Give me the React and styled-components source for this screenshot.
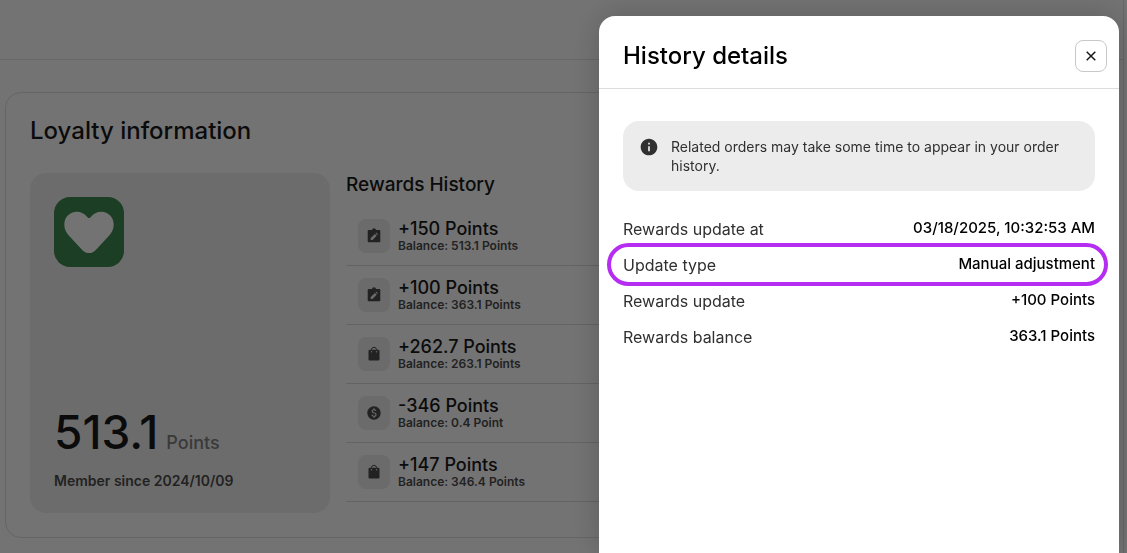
import React from "react";
import styled, { createGlobalStyle } from "styled-components";
import { MdInfo, MdPaid } from "react-icons/md";

const GlobalStyle = createGlobalStyle`
  * {
    box-sizing: border-box;
  }
  body {
    margin: 0;
    background: #fff;
    color: #1a1a1a;
    font-family: Inter, "Liberation Sans", sans-serif;
    overflow: hidden;
  }
  h1, h2, h3, p, ul, dl, dd {
    margin: 0;
    padding: 0;
  }
`;

const Page = styled.div`
  min-height: 100vh;
  margin-right: 3px;
  border-right: 1px solid #e4e4e4;
`;

const TopBar = styled.header`
  height: 60px;
  border-bottom: 1px solid #e4e4e4;
`;

const Card = styled.main`
  margin: 32px 24px 0 5px;
  padding: 20px 24px 24px;
  border: 1px solid #e0e0e0;
  border-radius: 16px;
`;

const CardTitle = styled.h1`
  font-size: 24px;
  font-weight: 500;
  line-height: 36px;
`;

const Columns = styled.div`
  display: flex;
  gap: 16px;
  margin-top: 24px;
`;

const Summary = styled.section`
  display: flex;
  flex-direction: column;
  flex: 0 0 300px;
  height: 340px;
  padding: 24px;
  border-radius: 16px;
  background: #f0f0f0;
`;

const Total = styled.p`
  display: flex;
  align-items: baseline;
  gap: 8px;
  margin-top: auto;
  font-size: 46px;
  font-weight: 500;
  line-height: 48px;
`;

const Unit = styled.span`
  color: #808080;
  font-size: 18px;
`;

const Member = styled.p`
  margin-top: 6px;
  color: #4d4d4d;
  font-size: 14px;
  font-weight: 600;
  line-height: 16px;
`;

const History = styled.section`
  flex: 1;
  min-width: 0;
`;

const HistoryTitle = styled.h2`
  font-size: 19px;
  font-weight: 500;
  line-height: 24px;
`;

const HistoryList = styled.ul`
  margin-top: 10px;
  list-style: none;
`;

const HistoryRow = styled.li`
  display: flex;
  align-items: center;
  gap: 8px;
  height: 59px;
  padding: 0 12px;
  border-bottom: 1px solid #dcdcdc;
`;

const IconTile = styled.span`
  display: flex;
  align-items: center;
  justify-content: center;
  width: 32px;
  height: 34px;
  border-radius: 8px;
  background: #ededed;
  color: #4d4d4d;
`;

const Entry = styled.div`
  padding-top: 2px;
`;

const Amount = styled.p`
  font-size: 18px;
  font-weight: 500;
  line-height: 18px;
`;

const Balance = styled.p`
  color: #4d4d4d;
  font-size: 12px;
  font-weight: 600;
  line-height: 16px;
`;

const Overlay = styled.div`
  position: fixed;
  inset: 0;
  display: flex;
  justify-content: flex-end;
  padding: 16px 8px 0 0;
  background: rgba(0, 0, 0, 0.55);
`;

const Drawer = styled.aside`
  width: 520px;
  max-width: 100%;
  border-radius: 16px 16px 0 0;
  background: #fff;
  color: #000;
  box-shadow: 0 0 32px rgba(0, 0, 0, 0.2);
`;

const DrawerHeader = styled.header`
  display: flex;
  align-items: center;
  justify-content: space-between;
  height: 73px;
  padding: 8px 12px 0 24px;
  border-bottom: 1px solid #dcdcdc;
`;

const DrawerTitle = styled.h2`
  font-size: 24px;
  font-weight: 500;
  line-height: 36px;
`;

const CloseButton = styled.button`
  display: flex;
  align-items: center;
  justify-content: center;
  width: 32px;
  height: 32px;
  padding: 0;
  border: 1px solid #c8c8c8;
  border-radius: 8px;
  background: #fff;
  color: #1a1a1a;
  cursor: pointer;
`;

const DrawerBody = styled.div`
  padding: 32px 24px;
`;

const Notice = styled.div`
  display: flex;
  gap: 12px;
  padding: 16px;
  border-radius: 16px;
  background: #ececec;
  color: #303030;
  font-size: 14px;
  line-height: 19px;

  svg {
    flex: none;
  }
`;

const Details = styled.dl`
  margin-top: 20px;
`;

const DetailRow = styled.div`
  position: relative;
  display: flex;
  justify-content: space-between;
  height: 36px;
`;

const Term = styled.dt`
  padding-top: 8px;
  color: #303030;
  font-size: 16px;
  line-height: 20px;
`;

const Value = styled.dd`
  padding-top: 7px;
  font-size: 15px;
  font-weight: 500;
  line-height: 20px;
`;

const Highlight = styled.span`
  position: absolute;
  inset: -4px -13px -3px -16px;
  border: 4px solid #b52df0;
  border-radius: 22px;
  pointer-events: none;
`;

const HeartLogo = () => (
  <svg width="70" height="70" viewBox="0 0 70 70" aria-hidden="true">
    <rect width="70" height="70" rx="16" fill="#3f8a50" />
    <path
      d="M35 21C34 21 33.400 20.200 32.600 19.200C30 16.500 26.500 14.800 23 14.800C15.500 14.800 10.300 20.500 10.300 27.500C10.300 32 12 35.500 15 38.800L28.500 53.200C32.500 57 37.500 57 41.500 53.200L55 38.800C58 35.500 59.700 32 59.700 27.500C59.700 20.500 54.500 14.800 47 14.800C43.500 14.800 40 16.500 37.400 19.200C36.600 20.200 36 21 35 21Z"
      fill="#fff"
    />
  </svg>
);

const EditIcon = () => (
  <svg width="16" height="16" viewBox="0 0 16 16" aria-hidden="true">
    <path
      d="M2.700 2H6a2 1.800 0 0 1 4 0h3.300a1 1 0 0 1 1 1v10.300a1 1 0 0 1-1 1H2.700a1 1 0 0 1-1-1V3a1 1 0 0 1 1-1Z"
      fill="currentColor"
    />
    <path
      d="M4.700 11.900v-1.800l4.200-4.200 1.800 1.800-4.200 4.200ZM9.500 5.300l.7-.7 1.800 1.800-.7.700Z"
      fill="#ededed"
    />
  </svg>
);

const BagIcon = () => (
  <svg width="16" height="16" viewBox="0 0 16 16" aria-hidden="true">
    <path d="M5.500 5V3.800a2.500 2.500 0 0 1 5 0V5" fill="none" stroke="currentColor" />
    <rect x="2.500" y="3.800" width="11" height="10.700" rx="1.200" fill="currentColor" />
    <circle cx="5.500" cy="5.700" r="0.700" fill="#ededed" />
    <circle cx="10.500" cy="5.700" r="0.700" fill="#ededed" />
  </svg>
);

const CloseIcon = () => (
  <svg width="10" height="10" viewBox="0 0 10 10" aria-hidden="true">
    <path d="M0.700 0.700L9.300 9.300M9.300 0.700L0.700 9.300" stroke="currentColor" strokeWidth="1.500" />
  </svg>
);

const icons = {
  edit: <EditIcon />,
  order: <BagIcon />,
  spend: <MdPaid size={16} />
};

const entries = [
  { type: "edit", amount: "+150 Points", balance: "513.1 Points" },
  { type: "edit", amount: "+100 Points", balance: "363.1 Points" },
  { type: "order", amount: "+262.7 Points", balance: "263.1 Points" },
  { type: "spend", amount: "-346 Points", balance: "0.4 Point" },
  { type: "order", amount: "+147 Points", balance: "346.4 Points" }
];

const details = [
  { term: "Rewards update at", value: "03/18/2025, 10:32:53 AM" },
  { term: "Update type", value: "Manual adjustment", highlighted: true },
  { term: "Rewards update", value: "+100 Points" },
  { term: "Rewards balance", value: "363.1 Points" }
];

export default function App() {
  return (
    <>
      <GlobalStyle />
      <Page>
        <TopBar />
        <Card>
          <CardTitle>Loyalty information</CardTitle>
          <Columns>
            <Summary>
              <HeartLogo />
              <Total>
                513.1 <Unit>Points</Unit>
              </Total>
              <Member>Member since 2024/10/09</Member>
            </Summary>
            <History>
              <HistoryTitle>Rewards History</HistoryTitle>
              <HistoryList>
                {entries.map((entry, i) => (
                  <HistoryRow key={i}>
                    <IconTile>{icons[entry.type]}</IconTile>
                    <Entry>
                      <Amount>{entry.amount}</Amount>
                      <Balance>Balance: {entry.balance}</Balance>
                    </Entry>
                  </HistoryRow>
                ))}
              </HistoryList>
            </History>
          </Columns>
        </Card>
      </Page>
      <Overlay>
        <Drawer role="dialog" aria-labelledby="drawer-title">
          <DrawerHeader>
            <DrawerTitle id="drawer-title">History details</DrawerTitle>
            <CloseButton type="button" aria-label="Close">
              <CloseIcon />
            </CloseButton>
          </DrawerHeader>
          <DrawerBody>
            <Notice>
              <MdInfo size={20} />
              <p>
                Related orders may take some time to appear in your order
                history.
              </p>
            </Notice>
            <Details>
              {details.map(({ term, value, highlighted }) => (
                <DetailRow key={term}>
                  <Term>{term}</Term>
                  <Value>
                    {value}
                    {highlighted && <Highlight />}
                  </Value>
                </DetailRow>
              ))}
            </Details>
          </DrawerBody>
        </Drawer>
      </Overlay>
    </>
  );
}
